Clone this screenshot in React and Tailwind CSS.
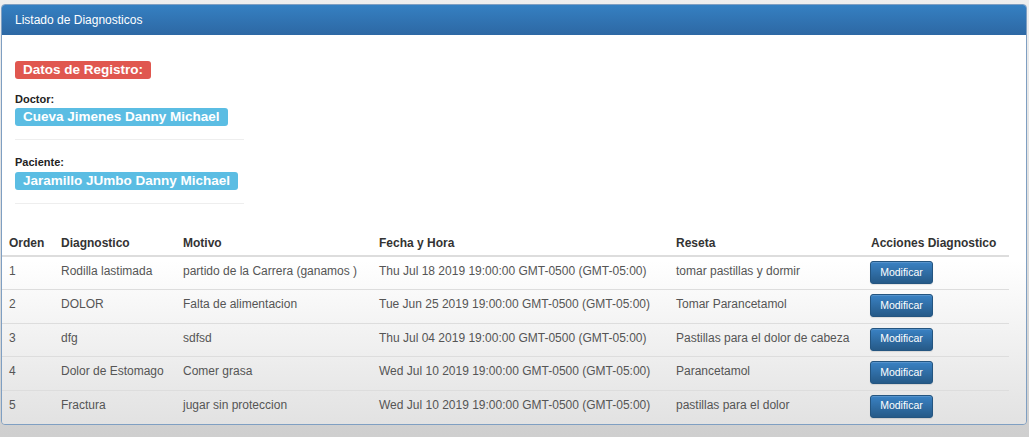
const ROWS = [
  { orden: 1, diag: 'Rodilla lastimada', motivo: 'partido de la Carrera (ganamos )', fecha: 'Thu Jul 18 2019 19:00:00 GMT-0500 (GMT-05:00)', reseta: 'tomar pastillas y dormir' },
  { orden: 2, diag: 'DOLOR', motivo: 'Falta de alimentacion', fecha: 'Tue Jun 25 2019 19:00:00 GMT-0500 (GMT-05:00)', reseta: 'Tomar Parancetamol' },
  { orden: 3, diag: 'dfg', motivo: 'sdfsd', fecha: 'Thu Jul 04 2019 19:00:00 GMT-0500 (GMT-05:00)', reseta: 'Pastillas para el dolor de cabeza' },
  { orden: 4, diag: 'Dolor de Estomago', motivo: 'Comer grasa', fecha: 'Wed Jul 10 2019 19:00:00 GMT-0500 (GMT-05:00)', reseta: 'Parancetamol' },
  { orden: 5, diag: 'Fractura', motivo: 'jugar sin proteccion', fecha: 'Wed Jul 10 2019 19:00:00 GMT-0500 (GMT-05:00)', reseta: 'pastillas para el dolor' },
];

const HEADERS = ['Orden', 'Diagnostico', 'Motivo', 'Fecha y Hora', 'Reseta', 'Acciones Diagnostico'];

export default function App() {
  return (
    <div
      className="h-[437px] w-[1029px] overflow-hidden bg-gradient-to-b from-[#eeeeee] to-[#cfcfcf] pt-[4px] pl-[1px] text-[#333]"
      style={{ fontFamily: '"Liberation Sans", Arial, sans-serif' }}
    >
      <div className="w-[1026px] h-[421px] rounded-[4px] border border-[#7f9fc2] overflow-hidden flex flex-col">
        <div className="h-[30px] shrink-0 bg-gradient-to-b from-[#3580c2] to-[#2d68a4] pl-[13px] flex items-center text-[12px] text-white">
          Listado de Diagnosticos
        </div>
        <div className="flex-1 bg-gradient-to-b from-white via-white via-[58%] to-[#e2e2e2]">
          <div className="pl-[13px] pt-[26px] flex flex-col items-start">
            <span className="h-[18px] leading-[18px] px-[8px] rounded-[3px] bg-[#e0574f] text-white text-[13.5px] font-bold">
              Datos de Registro:
            </span>
            <div className="mt-[13px] h-[14px] leading-[14px] text-[11px] font-bold text-[#222]">Doctor:</div>
            <span className="mt-[2px] h-[18px] leading-[18px] px-[8px] rounded-[3px] bg-[#5bbde3] text-white text-[13.5px] font-bold">
              Cueva Jimenes Danny Michael
            </span>
            <div className="mt-[13px] w-[229px] border-t border-[#eeeeee]" />
            <div className="mt-[15px] h-[14px] leading-[14px] text-[11px] font-bold text-[#222]">Paciente:</div>
            <span className="mt-[3px] h-[18px] leading-[18px] px-[8px] rounded-[3px] bg-[#5bbde3] text-white text-[13.5px] font-bold">
              Jaramillo JUmbo Danny Michael
            </span>
            <div className="mt-[13px] w-[229px] border-t border-[#eeeeee]" />
          </div>
          <table className="mt-[25px] w-[1007px] table-fixed border-collapse text-[12px]">
            <colgroup>
              <col className="w-[52px]" />
              <col className="w-[122px]" />
              <col className="w-[196px]" />
              <col className="w-[297px]" />
              <col className="w-[195px]" />
              <col className="w-[145px]" />
            </colgroup>
            <thead>
              <tr className="h-[27px] border-b-2 border-[#dddddd]">
                {HEADERS.map((h) => (
                  <th key={h} className="px-[7px] pb-[3px] align-bottom text-left font-bold leading-[17px] text-[#333] whitespace-nowrap">
                    {h}
                  </th>
                ))}
              </tr>
            </thead>
            <tbody>
              {ROWS.map((r, i) => (
                <tr key={r.orden} className={`h-[33.5px] ${i > 0 ? 'border-t border-[#dddddd]' : ''}`}>
                  <td className="px-[7px] pt-[6px] align-top leading-[17px] text-[#555]">{r.orden}</td>
                  <td className="px-[7px] pt-[6px] align-top leading-[17px] text-[#555] whitespace-nowrap">{r.diag}</td>
                  <td className="px-[7px] pt-[6px] align-top leading-[17px] text-[#555] whitespace-nowrap">{r.motivo}</td>
                  <td className="px-[7px] pt-[6px] align-top leading-[17px] text-[#555] whitespace-nowrap">{r.fecha}</td>
                  <td className="px-[7px] pt-[6px] align-top leading-[17px] text-[#555] whitespace-nowrap">{r.reseta}</td>
                  <td className="px-[6px] pt-[4px] align-top">
                    <button className="h-[23px] w-[63px] rounded-[3px] border border-[#245580] bg-gradient-to-b from-[#3a82c4] to-[#265a88] text-[10.5px] text-white shadow-[inset_0_1px_0_rgba(255,255,255,0.15),0_1px_1px_rgba(0,0,0,0.1)]">
                      Modificar
                    </button>
                  </td>
                </tr>
              ))}
            </tbody>
          </table>
        </div>
      </div>
    </div>
  );
}
